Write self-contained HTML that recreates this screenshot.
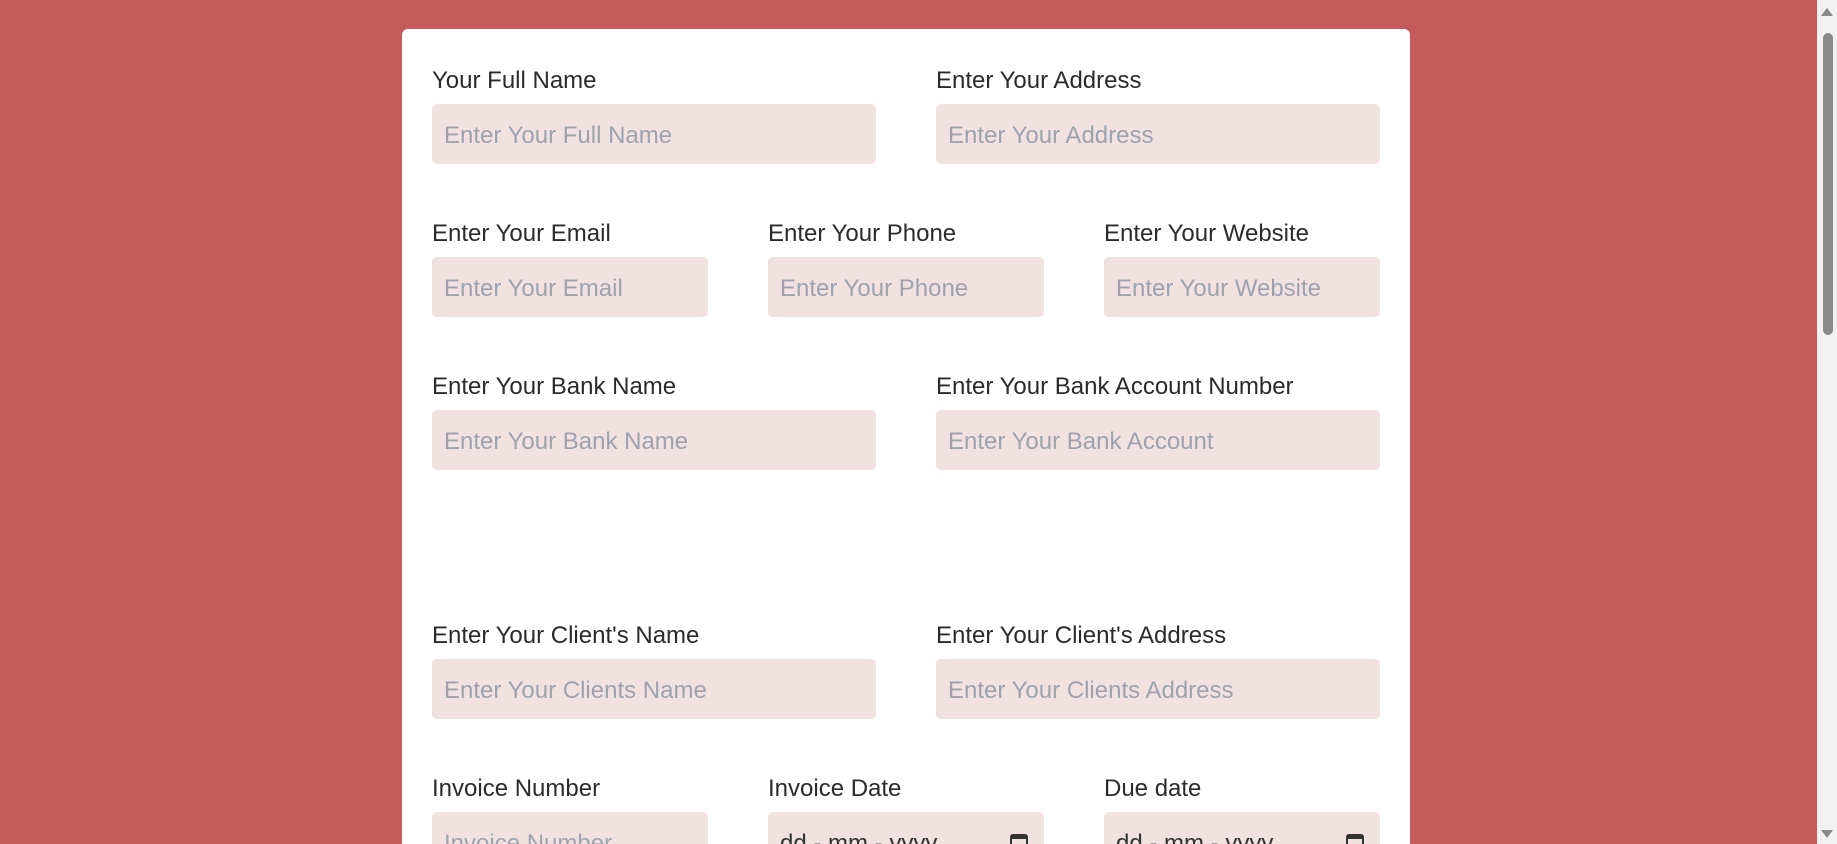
<!DOCTYPE html>
<html><head><style>
html,body{margin:0;padding:0;width:1837px;height:844px;overflow:hidden;}
body{background:#c45a5a;position:relative;font-family:"Liberation Sans",sans-serif;}
.card{position:absolute;left:402px;top:29px;width:1008px;height:815px;background:#fff;border-radius:6px 6px 0 0;}
.l{position:absolute;font-size:24px;color:#2b2b2b;line-height:28px;margin-top:2px;}
.i{position:absolute;height:60px;background:#f2e1e1;border-radius:5px;color:#9ca3af;font-size:24px;line-height:64px;padding-left:12px;box-sizing:border-box;overflow:hidden;white-space:nowrap;}
.cal{position:absolute;right:16px;top:22px;width:18px;height:20px;border:2px solid #333;border-radius:3px;box-sizing:border-box;border-top-width:5px;}
.sb{position:absolute;left:1817px;top:0;width:20px;height:844px;background:#f1f1f1;}
.th{position:absolute;left:1823px;top:33px;width:10px;height:302px;background:#8a8a8a;border-radius:5px;}
</style></head><body>
<div class="card"></div>
<div class="l" style="left:432px;top:65px">Your Full Name</div>
<div class="l" style="left:936px;top:65px">Enter Your Address</div>
<div class="i" style="left:432px;top:104px;width:444px">Enter Your Full Name</div>
<div class="i" style="left:936px;top:104px;width:444px">Enter Your Address</div>

<div class="l" style="left:432px;top:218px">Enter Your Email</div>
<div class="l" style="left:768px;top:218px">Enter Your Phone</div>
<div class="l" style="left:1104px;top:218px">Enter Your Website</div>
<div class="i" style="left:432px;top:257px;width:276px">Enter Your Email</div>
<div class="i" style="left:768px;top:257px;width:276px">Enter Your Phone</div>
<div class="i" style="left:1104px;top:257px;width:276px">Enter Your Website</div>

<div class="l" style="left:432px;top:371px">Enter Your Bank Name</div>
<div class="l" style="left:936px;top:371px">Enter Your Bank Account Number</div>
<div class="i" style="left:432px;top:410px;width:444px">Enter Your Bank Name</div>
<div class="i" style="left:936px;top:410px;width:444px">Enter Your Bank Account</div>

<div class="l" style="left:432px;top:620px">Enter Your Client's Name</div>
<div class="l" style="left:936px;top:620px">Enter Your Client's Address</div>
<div class="i" style="left:432px;top:659px;width:444px">Enter Your Clients Name</div>
<div class="i" style="left:936px;top:659px;width:444px">Enter Your Clients Address</div>

<div class="l" style="left:432px;top:773px">Invoice Number</div>
<div class="l" style="left:768px;top:773px">Invoice Date</div>
<div class="l" style="left:1104px;top:773px">Due date</div>
<div class="i" style="left:432px;top:812px;width:276px">Invoice Number</div>
<div class="i" style="left:768px;top:812px;width:276px;color:#333">dd - mm - yyyy<div class="cal"></div></div>
<div class="i" style="left:1104px;top:812px;width:276px;color:#333">dd - mm - yyyy<div class="cal"></div></div>

<div class="sb"></div>
<div class="th"></div>
<div style="position:absolute;left:1821px;top:8px;width:0;height:0;border-left:6px solid transparent;border-right:6px solid transparent;border-bottom:8px solid #888"></div>
<div style="position:absolute;left:1821px;top:830px;width:0;height:0;border-left:6px solid transparent;border-right:6px solid transparent;border-top:8px solid #888"></div>
</body></html>
